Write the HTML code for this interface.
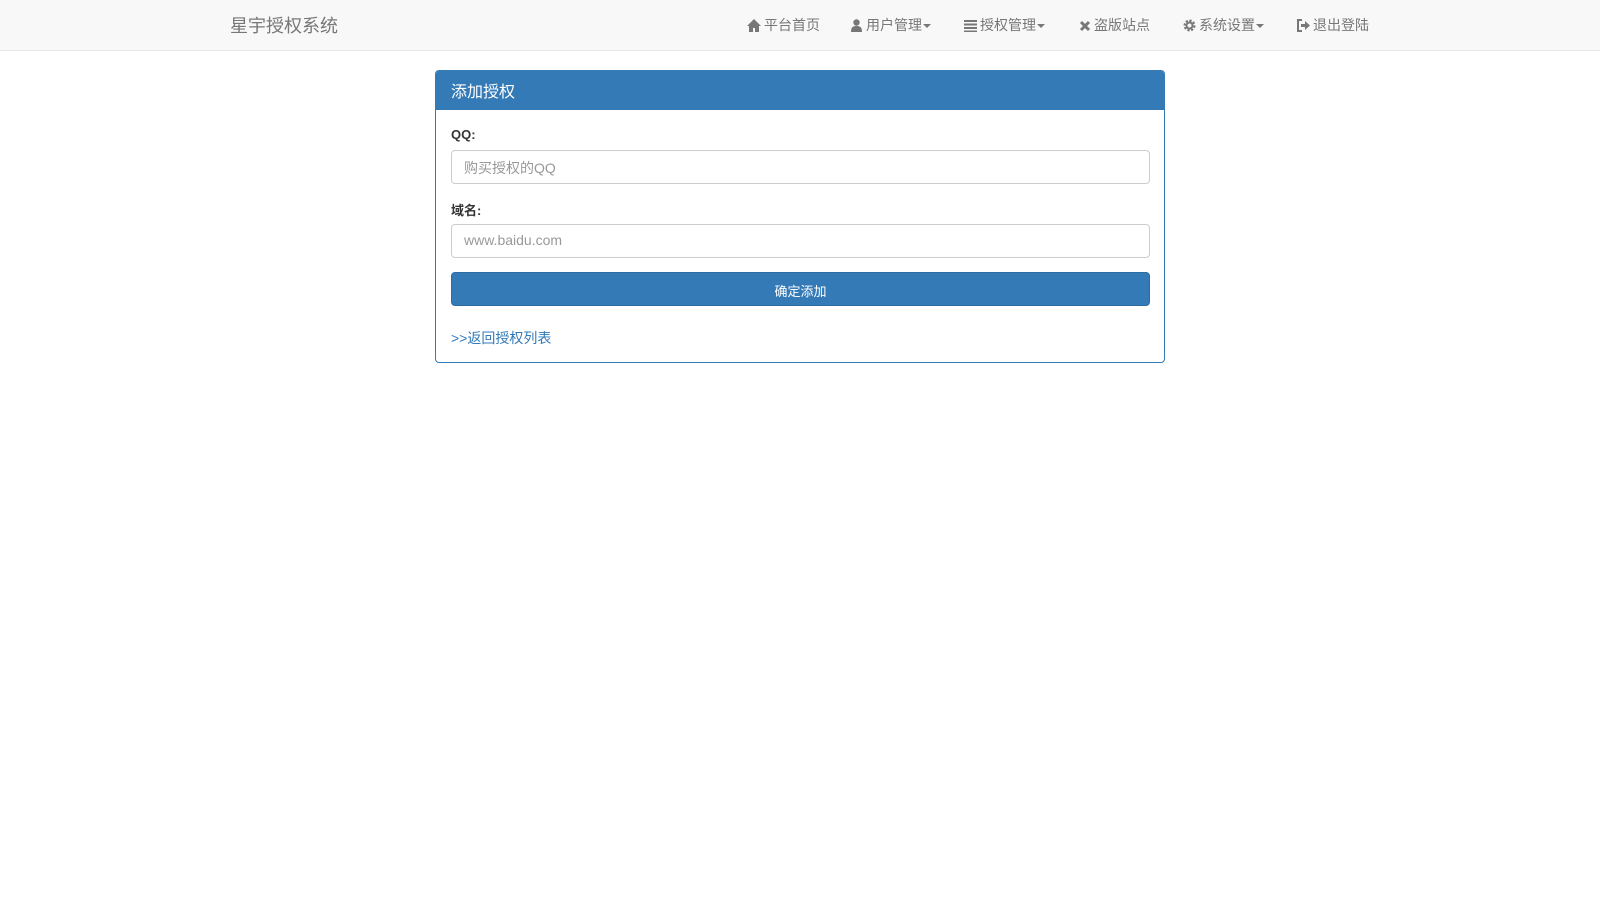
<!DOCTYPE html>
<html><head><meta charset="utf-8"><style>
*{box-sizing:border-box}
body{margin:0;background:#fff;font-family:"Liberation Sans","Noto Sans CJK SC",sans-serif;font-size:14px;color:#333}
.nav{position:absolute;left:0;top:0;width:1600px;height:51px;background:#f8f8f8;border-bottom:1px solid #e7e7e7}
.brand{position:absolute;left:230px;top:12px;font-size:18px;color:#777}
.item{position:absolute;top:15px;font-size:14px;color:#777;white-space:nowrap}
.caret{display:inline-block;width:0;height:0;border-top:4px solid #777;border-left:4px solid transparent;border-right:4px solid transparent;vertical-align:middle;margin-left:1px}
svg{vertical-align:-2px;margin-right:3px}
.panel{position:absolute;left:435px;top:70px;width:730px;height:293px;border:1px solid #337ab7;border-radius:4px;overflow:hidden}
.ph{height:39px;background:#337ab7;color:#fff;font-size:16px;padding:7px 15px}
label{position:absolute;left:15px;font-weight:bold;font-size:13px}
.inp{position:absolute;left:15px;width:699px;height:34px;border:1px solid #ccc;border-radius:4px;padding:7px 12px;color:#999;font-size:14px}
.btn{position:absolute;left:15px;top:201px;width:699px;height:34px;background:#337ab7;border:1px solid #2e6da4;border-radius:4px;color:#fff;text-align:center;padding-top:8px;font-size:13px}
.lnk{position:absolute;left:15px;top:257px;color:#337ab7;font-size:14px}
</style></head><body>
<div class="nav">
<div class="brand">星宇授权系统</div>
<div class="item" style="left:747px"><svg width="14" height="13" viewBox="0 0 14 13"><path d="M7 0L0 7h2v6h4V9h2v4h4V7h2z" fill="#777"/></svg>平台首页</div>
<div class="item" style="left:850px"><svg width="13" height="13" viewBox="0 0 13 13"><circle cx="6.5" cy="3.5" r="3.2" fill="#777"/><path d="M1 13c0-5 2-6 5.5-6s5.5 1 5.5 6z" fill="#777"/></svg>用户管理<span class="caret"></span></div>
<div class="item" style="left:964px"><svg width="13" height="13" viewBox="0 0 13 13"><path d="M0 1h13v2H0zM0 4.5h13v2H0zM0 8h13v2H0zM0 11.5h13v1.5H0z" fill="#777"/></svg>授权管理<span class="caret"></span></div>
<div class="item" style="left:1079px"><svg width="12" height="12" viewBox="0 0 12 12"><path d="M2 2l8 8M10 2l-8 8" stroke="#777" stroke-width="3"/></svg>盗版站点</div>
<div class="item" style="left:1183px"><svg width="13" height="13" viewBox="0 0 13 13"><circle cx="6.5" cy="6.5" r="4.5" fill="none" stroke="#777" stroke-width="3" stroke-dasharray="2 1.5"/><circle cx="6.5" cy="6.5" r="3" fill="none" stroke="#777" stroke-width="2"/></svg>系统设置<span class="caret"></span></div>
<div class="item" style="left:1296px"><svg width="14" height="13" viewBox="0 0 14 13"><path d="M6 1H2v11h4" fill="none" stroke="#777" stroke-width="2"/><path d="M5 5h4V2l5 4.5-5 4.5V8H5z" fill="#777"/></svg>退出登陆</div>
</div>
<div class="panel">
<div class="ph">添加授权</div>
<label style="top:56px">QQ:</label>
<div class="inp" style="top:79px">购买授权的QQ</div>
<label style="top:129px">域名:</label>
<div class="inp" style="top:153px">www.baidu.com</div>
<div class="btn">确定添加</div>
<div class="lnk">&gt;&gt;返回授权列表</div>
</div>
</body></html>
